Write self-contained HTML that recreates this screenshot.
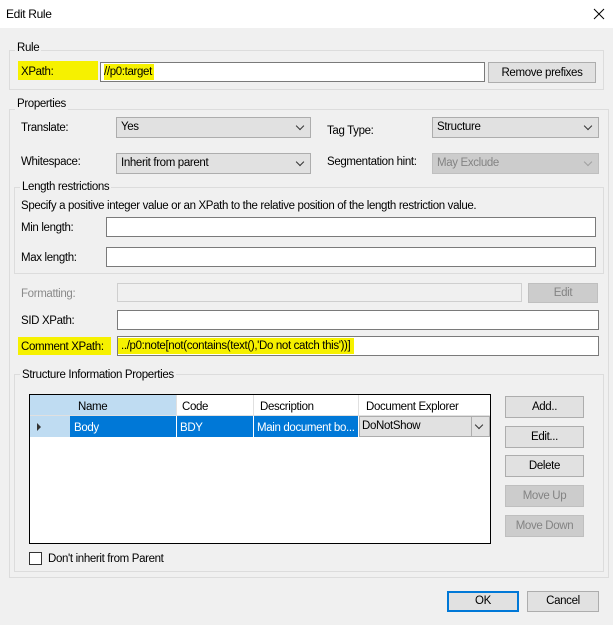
<!DOCTYPE html>
<html><head><style>
*{box-sizing:border-box;margin:0;padding:0}
body{width:613px;height:625px;background:#f0f0f0;font-family:"Liberation Sans",sans-serif;font-size:11.5px;letter-spacing:-0.35px;color:#000;position:relative;overflow:hidden}
.a{position:absolute}
.title{left:0;top:0;width:613px;height:28px;background:#fff}
.gb{position:absolute;border:1px solid #dcdcdc}
.lbl{position:absolute;background:#f0f0f0;padding:0 2px;line-height:14px}
.t{position:absolute;line-height:14px;white-space:nowrap}
.tb{position:absolute;background:#fff;border:1px solid #7a7a7a;height:20px;line-height:18px;padding-left:3px;white-space:nowrap;overflow:hidden}
.cb{position:absolute;background:#e1e1e1;border:1px solid #adadad;height:21px;line-height:19px;padding-left:4px}
.cb:after{content:"";position:absolute;right:7px;top:5px;width:5px;height:5px;border-right:1px solid #333;border-bottom:1px solid #333;transform:rotate(45deg)}
.dis{background:#cccccc;border-color:#bfbfbf;color:#838383}
.dis:after{border-color:#a0a0a0}
.btn{position:absolute;background:#e1e1e1;border:1px solid #adadad;text-align:center;line-height:20px}
.btn.d{background:#cccccc;border-color:#bfbfbf;color:#838383}
.hl{background:#f6f100}
</style></head><body>
<div class="a title"></div>
<div class="t" style="left:6px;top:7px;font-size:12px">Edit Rule</div>
<svg class="a" style="left:593px;top:8px" width="12" height="12"><path d="M1 1L11 11M11 1L1 11" stroke="#000" stroke-width="1"/></svg>

<div class="gb" style="left:9px;top:50px;width:595px;height:40px"></div>
<div class="lbl" style="left:15px;top:41px">Rule</div>
<div class="a hl" style="left:18px;top:61px;width:80px;height:19px"></div>
<div class="t" style="left:21px;top:65px">XPath:</div>
<div class="tb" style="left:100px;top:62px;width:385px"><span class="hl" style="padding:2px 2px 2px 0">//p0:target</span></div>
<div class="btn" style="left:488px;top:62px;width:108px;height:21px">Remove prefixes</div>

<div class="gb" style="left:9px;top:109px;width:600px;height:469px"></div>
<div class="lbl" style="left:15px;top:97px">Properties</div>
<div class="t" style="left:21px;top:121px">Translate:</div>
<div class="cb" style="left:116px;top:117px;width:195px">Yes</div>
<div class="t" style="left:327px;top:124px">Tag Type:</div>
<div class="cb" style="left:432px;top:117px;width:167px">Structure</div>
<div class="t" style="left:21px;top:155px">Whitespace:</div>
<div class="cb" style="left:116px;top:153px;width:195px">Inherit from parent</div>
<div class="t" style="left:327px;top:155px">Segmentation hint:</div>
<div class="cb dis" style="left:432px;top:153px;width:167px">May Exclude</div>

<div class="gb" style="left:14px;top:187px;width:590px;height:87px"></div>
<div class="lbl" style="left:20px;top:180px">Length restrictions</div>
<div class="t" style="left:21px;top:199px">Specify a positive integer value or an XPath to the relative position of the length restriction value.</div>
<div class="t" style="left:21px;top:221px">Min length:</div>
<div class="tb" style="left:106px;top:217px;width:490px"></div>
<div class="t" style="left:21px;top:251px">Max length:</div>
<div class="tb" style="left:106px;top:247px;width:490px"></div>

<div class="t" style="left:21px;top:287px;color:#8a8a8a">Formatting:</div>
<div class="tb" style="left:117px;top:283px;width:405px;height:19px;background:#f0f0f0;border-color:#cfcfcf"></div>
<div class="btn d" style="left:528px;top:283px;width:70px;height:20px;line-height:18px">Edit</div>
<div class="t" style="left:21px;top:314px">SID XPath:</div>
<div class="tb" style="left:117px;top:310px;width:482px"></div>
<div class="a hl" style="left:18px;top:337px;width:93px;height:18px"></div>
<div class="t" style="left:21px;top:340px">Comment XPath:</div>
<div class="tb" style="left:117px;top:336px;width:482px;padding-left:0"><span class="hl" style="padding:2px 4px 2px 3px">../p0:note[not(contains(text(),'Do not catch this'))]</span></div>

<div class="gb" style="left:14px;top:374px;width:590px;height:198px"></div>
<div class="lbl" style="left:20px;top:368px">Structure Information Properties</div>
<div class="a" style="left:29px;top:394px;width:462px;height:150px;background:#fff;border:1px solid #000"></div>
<div class="a" style="left:30px;top:395px;width:40px;height:42px;background:#bfdcf2"></div>
<div class="a" style="left:70px;top:395px;width:106px;height:20px;background:#bfdcf2"></div>
<div class="t" style="left:78px;top:400px">Name</div>
<div class="a" style="left:176px;top:395px;width:1px;height:20px;background:#e0e0e0"></div>
<div class="t" style="left:182px;top:400px">Code</div>
<div class="a" style="left:253px;top:395px;width:1px;height:20px;background:#e0e0e0"></div>
<div class="t" style="left:260px;top:400px">Description</div>
<div class="a" style="left:358px;top:395px;width:1px;height:20px;background:#e0e0e0"></div>
<div class="t" style="left:366px;top:400px">Document Explorer</div>
<div class="a" style="left:30px;top:415px;width:460px;height:1px;background:#e0e0e0"></div>
<svg class="a" style="left:36px;top:422px" width="6" height="10"><path d="M1 1L5 5L1 9Z" fill="#333"/></svg>
<div class="a" style="left:70px;top:416px;width:288px;height:21px;background:#0078d7"></div>
<div class="a" style="left:176px;top:416px;width:1px;height:21px;background:#fff"></div>
<div class="a" style="left:253px;top:416px;width:1px;height:21px;background:#fff"></div>
<div class="t" style="left:74px;top:421px;color:#fff">Body</div>
<div class="t" style="left:180px;top:421px;color:#fff">BDY</div>
<div class="t" style="left:257px;top:421px;color:#fff">Main document bo...</div>
<div class="cb" style="left:359px;top:416px;width:131px;height:21px;border-color:#adadad;padding-left:2px">DoNotShow</div>
<div class="a" style="left:471px;top:417px;width:1px;height:19px;background:#adadad"></div>

<div class="btn" style="left:505px;top:396px;width:79px;height:22px">Add..</div>
<div class="btn" style="left:505px;top:426px;width:79px;height:22px">Edit...</div>
<div class="btn" style="left:505px;top:455px;width:79px;height:22px">Delete</div>
<div class="btn d" style="left:505px;top:485px;width:79px;height:22px">Move Up</div>
<div class="btn d" style="left:505px;top:515px;width:79px;height:22px">Move Down</div>

<div class="a" style="left:29px;top:552px;width:13px;height:13px;background:#fff;border:1px solid #333"></div>
<div class="t" style="left:48px;top:552px">Don't inherit from Parent</div>

<div class="btn" style="left:447px;top:591px;width:72px;height:21px;border:2px solid #0078d7;line-height:17px">OK</div>
<div class="btn" style="left:527px;top:591px;width:72px;height:21px;line-height:19px">Cancel</div>
</body></html>
